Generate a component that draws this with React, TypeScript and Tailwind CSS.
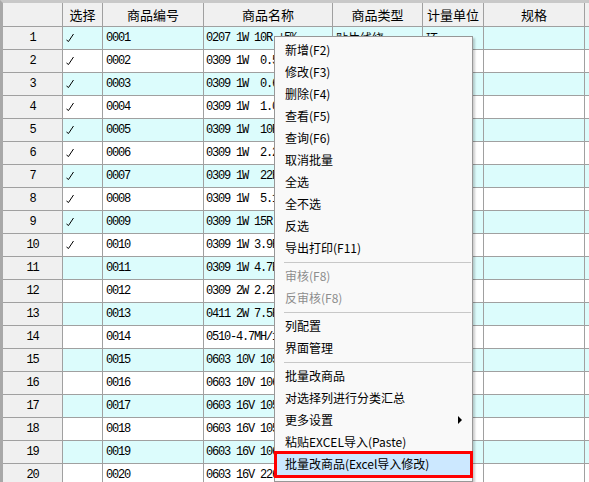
import { FC } from 'react';

type Row = { code: string; name: string; type: string; unit: string; checked: boolean };

const names = [
  '0207 1W 10R ±5%',
  '0309 1W  0.56R',
  '0309 1W  0.68R',
  '0309 1W  1.0R',
  '0309 1W  10R',
  '0309 1W  2.2R',
  '0309 1W  22R',
  '0309 1W  5.1R',
  '0309 1W 15R',
  '0309 1W 3.9R',
  '0309 1W 4.7R',
  '0309 2W 2.2R',
  '0411 2W 7.5R',
  '0510-4.7MH/1A',
  '0603 10V 105K',
  '0603 10V 106K',
  '0603 16V 105K',
  '0603 16V 105M',
  '0603 16V 106K',
  '0603 16V 226K X5R',
];

// only the first and last rows carry type/unit in this view
const rows: Row[] = names.map((name, i) => ({
  code: String(i + 1).padStart(4, '0'),
  name,
  type: i === 0 ? '贴片线绕' : i === 19 ? '贴片电容' : '',
  unit: i === 0 ? '环' : i === 19 ? '粒' : '',
  checked: i < 10,
}));

const cols = [
  { label: '选择', w: 'w-[40px]' },
  { label: '商品编号', w: 'w-[101px]' },
  { label: '商品名称', w: 'w-[129px]' },
  { label: '商品类型', w: 'w-[90px]' },
  { label: '计量单位', w: 'w-[61px]' },
  { label: '规格', w: 'w-[101px]' },
];

type MenuItem = { label: string; disabled?: boolean; sub?: boolean; active?: boolean } | 'sep';

const menu: MenuItem[] = [
  { label: '新增(F2)' },
  { label: '修改(F3)' },
  { label: '删除(F4)' },
  { label: '查看(F5)' },
  { label: '查询(F6)' },
  { label: '取消批量' },
  { label: '全选' },
  { label: '全不选' },
  { label: '反选' },
  { label: '导出打印(F11)' },
  'sep',
  { label: '审核(F8)', disabled: true },
  { label: '反审核(F8)', disabled: true },
  'sep',
  { label: '列配置' },
  { label: '界面管理' },
  'sep',
  { label: '批量改商品' },
  { label: '对选择列进行分类汇总' },
  { label: '更多设置', sub: true },
  { label: '粘贴EXCEL导入(Paste)' },
  { label: '批量改商品(Excel导入修改)', active: true },
];

const Check: FC = () => (
  <svg width="9" height="10" viewBox="0 0 9 10" className="ml-[3px]">
    <polyline points="0.5,7 2.5,8.5 7.5,1" fill="none" stroke="#000" strokeWidth="1" />
  </svg>
);

const mono = "font-['Liberation_Mono',monospace] text-[12px] tracking-[-1.2px]";
const cjk = "font-['Noto_Sans_CJK_SC',sans-serif]";

const ContextMenu: FC = () => (
  <div className="absolute left-[271px] top-[33px] w-[199px] h-[446px] bg-[#f9f9f9] border border-[#979797] shadow-[2px_2px_2px_rgba(0,0,0,0.2)] pt-[2px]">
    {menu.map((item, i) =>
      item === 'sep' ? (
        <div key={i} className="h-[6px] flex items-center pl-[9px] pr-[1px]">
          <div className="h-px w-full bg-[#c8c8c8]" />
        </div>
      ) : (
        <div
          key={i}
          className={`relative h-[22px] flex items-center pl-[10px] text-[12px] ${cjk} ${
            item.disabled ? 'text-[#8d8d8d]' : 'text-black'
          } ${item.active ? 'bg-[#cce8ff]' : ''}`}
        >
          {item.label}
          {item.sub && (
            <span className="absolute right-[10px] top-[7px] w-0 h-0 border-y-[4px] border-y-transparent border-l-[4px] border-l-black" />
          )}
          {item.active && (
            <span className="absolute -left-[1px] -right-[1px] -top-[2px] -bottom-[3px] border-[3px] border-[#ff0000]" />
          )}
        </div>
      )
    )}
  </div>
);

export default function App() {
  return (
    <div className="relative w-[589px] h-[482px] overflow-hidden bg-white border-l-[3px] border-t-[3px] border-l-[#a8a8a8] border-t-[#c8c8c8]">
      {/* header */}
      <div className={`flex h-[24px] bg-[#f0f0f0] border-b border-[#a0a0a0] text-[13px] ${cjk}`}>
        <div className="w-[60px] shrink-0 border-r border-[#a0a0a0]" />
        {cols.map((c) => (
          <div key={c.label} className={`${c.w} shrink-0 border-r border-[#a0a0a0] flex items-center justify-center`}>
            {c.label}
          </div>
        ))}
        <div className="flex-1" />
      </div>

      {rows.map((r, i) => {
        const bg = i % 2 === 0 ? 'bg-[#dcfcfc]' : 'bg-white';
        return (
          <div key={r.code} className="flex h-[23px] border-b border-[#a0a0a0]">
            <div className={`w-[60px] shrink-0 bg-[#f0f0f0] border-r border-[#a0a0a0] flex items-center justify-center ${mono}`}>
              {i + 1}
            </div>
            <div className={`w-[40px] shrink-0 ${bg} border-r border-[#a0a0a0] flex items-center`}>
              {r.checked && <Check />}
            </div>
            <div className={`w-[101px] shrink-0 ${bg} border-r border-[#a0a0a0] flex items-center pl-[3px] ${mono}`}>
              {r.code}
            </div>
            <div className={`w-[129px] shrink-0 ${bg} border-r border-[#a0a0a0] flex items-center pl-[2px] overflow-hidden whitespace-pre ${mono}`}>
              {r.name}
            </div>
            <div className={`w-[90px] shrink-0 ${bg} border-r border-[#a0a0a0] flex items-center pl-[3px] text-[12px] ${cjk}`}>
              {r.type}
            </div>
            <div className={`w-[61px] shrink-0 ${bg} border-r border-[#a0a0a0] flex items-center pl-[3px] text-[12px] ${cjk}`}>
              {r.unit}
            </div>
            <div className={`w-[101px] shrink-0 ${bg} border-r border-[#a0a0a0]`} />
            <div className={`flex-1 ${bg}`} />
          </div>
        );
      })}

      <ContextMenu />
    </div>
  );
}
